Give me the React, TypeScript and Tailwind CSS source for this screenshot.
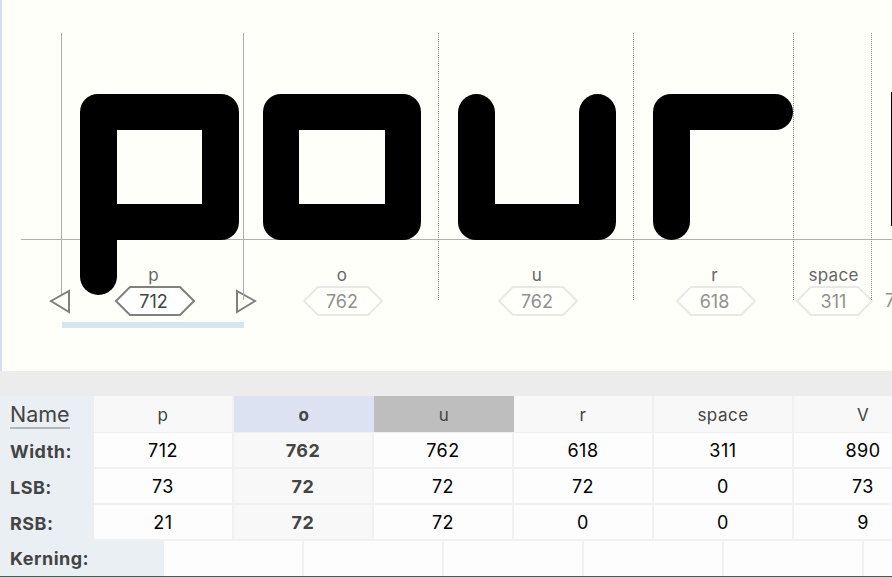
import React from 'react';

type GlyphName = 'p' | 'o' | 'u' | 'r' | 'space' | 'V';

const glyphCells: { name: GlyphName; value: string; advance: number; hexWidth: number; bearing: number }[] = [
  { name: 'p', value: '712', advance: 182, hexWidth: 80, bearing: 18 },
  { name: 'o', value: '762', advance: 195, hexWidth: 80, bearing: 19 },
  { name: 'u', value: '762', advance: 195, hexWidth: 80, bearing: 19 },
  { name: 'r', value: '618', advance: 160, hexWidth: 80, bearing: 19 },
  { name: 'space', value: '311', advance: 78, hexWidth: 77, bearing: 19 },
];

const columns = [
  { name: 'p', width: '712', lsb: '73', rsb: '21' },
  { name: 'o', width: '762', lsb: '72', rsb: '72' },
  { name: 'u', width: '762', lsb: '72', rsb: '72' },
  { name: 'r', width: '618', lsb: '72', rsb: '0' },
  { name: 'space', width: '311', lsb: '0', rsb: '0' },
  { name: 'V', width: '890', lsb: '73', rsb: '9' },
];

const rows: { label: string; key: 'width' | 'lsb' | 'rsb' }[] = [
  { label: 'Width:', key: 'width' },
  { label: 'LSB:', key: 'lsb' },
  { label: 'RSB:', key: 'rsb' },
];

// the test string is drawn from plain boxes, as the font editor's preview shows it
const GlyphShape = ({ name }: { name: GlyphName }) => {
  if (name === 'p') {
    return (
      <div className="relative h-[146px] w-[159px] rounded-[18px] border-x-[37px] border-y-[36px] border-black">
        <div className="absolute -left-[37px] top-[70px] h-[95px] w-[37px] rounded-b-[19px] bg-black" />
      </div>
    );
  }
  if (name === 'o') {
    return <div className="h-[146px] w-[158px] rounded-[18px] border-[36px] border-black" />;
  }
  if (name === 'u') {
    return (
      <div className="flex h-[146px] w-[158px] flex-col">
        <div className="flex flex-1 justify-between">
          <div className="w-[37px] rounded-t-[19px] bg-black" />
          <div className="w-[37px] rounded-t-[19px] bg-black" />
        </div>
        <div className="h-[36px] rounded-b-[18px] bg-black" />
      </div>
    );
  }
  if (name === 'r') {
    return (
      <div className="flex h-[146px] w-[140px] flex-col">
        <div className="h-[36px] rounded-r-[18px] rounded-tl-[18px] bg-black" />
        <div className="w-[37px] flex-1 rounded-b-[19px] bg-black" />
      </div>
    );
  }
  if (name === 'V') {
    return <div className="-mt-px h-[134px] w-[4px] bg-black" />;
  }
  return <div className="h-[146px]" />;
};

const WidthBadge = ({ label, value, width, active }: { label: string; value: string; width: number; active: boolean }) => (
  <div className="flex h-[52px] shrink-0 flex-col items-center pl-[2px]">
    <div className="h-[22px] text-[17px] leading-[22px] tracking-[0.3px] text-[#666666]">{label}</div>
    <div className="relative h-[30px]" style={{ width }}>
      <svg className="absolute left-[1px] top-0" width={width} height={30}>
        <polygon
          points={`1,15 15,1 ${width - 15},1 ${width - 1},15 ${width - 15},29 15,29`}
          fill={active ? '#ffffff' : '#fffffb'}
          stroke={active ? '#808080' : '#e8e8e6'}
          strokeWidth="2"
        />
      </svg>
      <div className={`relative pt-px text-center text-[18px] leading-[30px] ${active ? 'text-[#444444]' : 'text-[#909090]'}`}>
        {value}
      </div>
    </div>
  </div>
);

const GlyphCanvas = () => (
  <div className="relative h-[371px] shrink-0 overflow-hidden border-l-2 border-[#d3dff5] bg-[#fffffa] pl-[59px] pt-[33px]">
    {/* baseline */}
    <div className="absolute left-[19px] top-[239px] h-px w-[871px] bg-[#b0b0ac]" />

    <div className="relative flex h-[267px]">
      {glyphCells.map((cell, i) => {
        const active = i === 0;
        return (
          <div
            key={cell.name}
            className={`relative flex shrink-0 flex-col border-l ${i < 2 ? 'border-[#aeaeae]' : 'border-dotted border-[#888888]'}`}
            style={{ width: cell.advance }}
          >
            <div className="h-[61px] shrink-0" />
            <div className="h-[146px] shrink-0" style={{ paddingLeft: cell.bearing }}>
              <GlyphShape name={cell.name} />
            </div>
            <div className="mt-[24px]">
              <WidthBadge label={cell.name} value={cell.value} width={cell.hexWidth} active={active} />
            </div>
            {active && (
              <>
                <div className="mt-[6px] h-[6px] w-[182px] shrink-0 bg-[#d6e6f1]" />
                <svg className="absolute -left-[13px] top-[255px]" width="24" height="26">
                  <polygon points="2,13 20,3 20,24" fill="#fffffa" stroke="#808080" strokeWidth="2" />
                </svg>
                <svg className="absolute left-[172px] top-[255px]" width="24" height="26">
                  <polygon points="3,3 21,13 3,24" fill="#fffffa" stroke="#808080" strokeWidth="2" />
                </svg>
              </>
            )}
          </div>
        );
      })}
      <div className="relative flex w-[21px] shrink-0 flex-col border-l border-dotted border-[#888888]">
        <div className="h-[60px] shrink-0" />
        <div className="h-[147px] shrink-0 pl-[19px]">
          <GlyphShape name="V" />
        </div>
        <div className="mt-[46px] h-[30px] shrink-0 pl-[13px] text-[18px] leading-[30px] text-[#909090]">7</div>
      </div>
    </div>

    <div className="absolute -left-[2px] top-[331px] h-[40px] w-px bg-[#fffffa]" />
  </div>
);

const headerClass = (name: string) => {
  if (name === 'o') return 'bg-[#dce2f2] font-bold';
  if (name === 'u') return 'bg-[#bebebe]';
  return 'bg-[#f8f8f8] border-r-2 border-[#f1f1f1]';
};

const MetricsTable = () => (
  <div className="flex-1 overflow-hidden bg-[#fdfdfd]">
    <div className="flex">
      <div className="w-[94px] shrink-0 bg-[#eaeff3] pl-[10px] text-[#444444]">
        <div className="flex h-[37px] items-start pt-[6px]">
          <span className="border-b-2 border-[#b4b6bc] text-[21.5px] leading-[25px]">Name</span>
        </div>
        {rows.map((row) => (
          <div key={row.key} className="flex h-[36px] items-center text-[18px] font-bold tracking-[0.5px]">
            {row.label}
          </div>
        ))}
      </div>
      {columns.map((col) => (
        <div key={col.name} className="w-[140px] shrink-0">
          <div className={`flex h-[36px] items-center justify-center pt-[3px] text-[17px] tracking-[0.5px] text-[#444444] ${headerClass(col.name)}`}>
            {col.name}
          </div>
          <div className="h-px bg-[#f1f1f1]" />
          {rows.map((row) => (
            <div
              key={row.key}
              className={`flex h-[36px] items-center justify-center border-b-2 border-r-2 border-[#f1f1f1] text-[18px] tracking-[0.5px] ${col.name === 'o' ? 'bg-[#f8f8f8] font-bold text-[#444444]' : 'text-black'}`}
            >
              {col[row.key]}
            </div>
          ))}
        </div>
      ))}
    </div>
    <div className="flex h-[35px]">
      <div className="flex w-[164px] shrink-0 items-center bg-[#eaeff3] pl-[10px] text-[18px] font-bold tracking-[0.5px] text-[#444444]">
        Kerning:
      </div>
      {columns.map((col) => (
        <div key={col.name} className="w-[140px] shrink-0 border-r-2 border-[#f1f1f1]" />
      ))}
    </div>
    <div className="h-px bg-[#555555]" />
  </div>
);

export default function App() {
  return (
    <div className="flex h-[577px] w-[892px] flex-col overflow-hidden font-['Inter',sans-serif]">
      <GlyphCanvas />
      <div className="h-[25px] shrink-0 bg-[#ececec]" />
      <MetricsTable />
    </div>
  );
}
